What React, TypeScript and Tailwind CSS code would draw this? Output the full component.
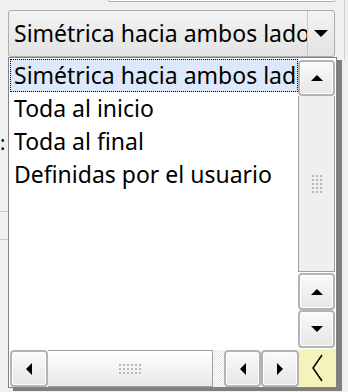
import React from 'react';

const font = { fontFamily: '"Noto Sans", "Open Sans", sans-serif' };

const Tri: React.FC<{ dir: 'up' | 'down' | 'left' | 'right'; big?: boolean }> = ({ dir, big }) => {
  const s = big ? 14 : 12;
  const t = s / 2;
  const pts =
    dir === 'up'
      ? `0,${t} ${t},0 ${s},${t}`
      : dir === 'down'
        ? `0,0 ${s},0 ${t},${t}`
        : dir === 'left'
          ? `${t},0 ${t},${s} 0,${t}`
          : `0,0 ${t},${t} 0,${s}`;
  const w = dir === 'up' || dir === 'down' ? s : t;
  const h = dir === 'up' || dir === 'down' ? t : s;
  return (
    <svg width={w} height={h} viewBox={`0 0 ${w} ${h}`}>
      <polygon points={pts} fill="#000" />
    </svg>
  );
};

const ScrollBtn: React.FC<{ dir: 'up' | 'down' | 'left' | 'right'; className?: string }> = ({ dir, className }) => (
  <div
    className={`flex items-center justify-center rounded-[4px] border-2 border-[#b4b4b4] bg-gradient-to-b from-[#fafafa] to-[#e6e6e6] shadow-[inset_0_0_0_1px_#ffffff] ${className ?? ''}`}
  >
    <Tri dir={dir} />
  </div>
);

const Dots: React.FC<{ cols: number; rows: number }> = ({ cols, rows }) => (
  <div className="grid gap-[2px]" style={{ gridTemplateColumns: `repeat(${cols}, 2px)` }}>
    {Array.from({ length: cols * rows }).map((_, i) => (
      <div key={i} className="h-[2px] w-[2px] bg-[#b8b8b8]" />
    ))}
  </div>
);

const items = ['Toda al inicio', 'Toda al final', 'Definidas por el usuario'];

export default function App() {
  return (
    <div className="relative h-[392px] w-[348px] overflow-hidden bg-[#f0f0f0] text-black" style={font}>
      {/* panel edges behind the popup */}
      <div className="absolute right-[3px] top-0 h-[60px] w-px bg-[#d0d0d0]" />
      <div className="absolute left-0 top-[211px] h-px w-[8px] bg-[#c9c9c9]" />
      <div className="absolute left-0 top-[239px] h-px w-[8px] bg-[#c9c9c9]" />
      <div className="absolute left-0 top-[133px] text-[20px] leading-none">:</div>

      {/* input above, cut off */}
      <div className="ml-[108px] h-[2px] w-[227px] rounded-b-[2px] border-x border-b border-[#adadad] bg-white" />

      {/* combobox */}
      <div className="ml-[8px] mt-[8px] flex h-[47px] w-[327px] rounded-[3px] border border-[#adadad] bg-gradient-to-b from-[#f3f3f3] to-[#e3e3e3]">
        <div className="flex flex-1 items-center overflow-hidden whitespace-nowrap pl-[5px] text-[23px]">
          Simétrica hacia ambos lados
        </div>
        <div className="flex w-[27px] items-center justify-center border-l border-[#c8c8c8]">
          <Tri dir="down" big />
        </div>
      </div>

      {/* dropdown popup */}
      <div className="absolute left-[8px] top-[57px] flex h-[331px] w-[329px] flex-col border border-[#828282] bg-white shadow-[5px_3px_0_#7f7f7f]">
        <div className="flex flex-1">
          <div className="flex-1 overflow-hidden pl-px pt-px text-[23px]">
            <div className="flex h-[33px] items-center overflow-hidden whitespace-nowrap border border-dotted border-black bg-[#dde9fa] pl-[3px]">
              Simétrica hacia ambos lados
            </div>
            {items.map((t) => (
              <div key={t} className="flex h-[33px] items-center whitespace-nowrap pl-[4px]">
                {t}
              </div>
            ))}
          </div>
          <div className="flex w-[38px] flex-col pb-[1px] pr-px pt-[2px]">
            <ScrollBtn dir="up" className="h-[36px]" />
            <div className="flex flex-1 items-center justify-center border-x border-b border-[#a0a0a0] bg-[#efefef]">
              <Dots cols={3} rows={5} />
            </div>
            <ScrollBtn dir="up" className="mt-px h-[37px]" />
            <ScrollBtn dir="down" className="h-[38px]" />
          </div>
        </div>
        <div className="flex h-[38px]">
          <div className="flex flex-1 pl-px pt-px">
            <ScrollBtn dir="left" className="w-[38px]" />
            <div className="flex w-[165px] items-center justify-center border-y border-r border-[#a0a0a0] bg-gradient-to-b from-white to-[#e8e8e8]">
              <Dots cols={6} rows={3} />
            </div>
            <div className="w-[11px] bg-[repeating-conic-gradient(#e4e4e4_0_25%,#ffffff_0_50%)] bg-[length:2px_2px]" />
            <ScrollBtn dir="left" className="w-[37px]" />
            <ScrollBtn dir="right" className="w-[38px]" />
          </div>
          <div className="flex w-[38px] items-center justify-center bg-[#f5f3b9]">
            <svg width="12" height="28" viewBox="0 0 12 28">
              <polyline points="10,1 1,14 10,27" fill="none" stroke="#000" strokeWidth="1.5" />
            </svg>
          </div>
        </div>
      </div>
    </div>
  );
}
